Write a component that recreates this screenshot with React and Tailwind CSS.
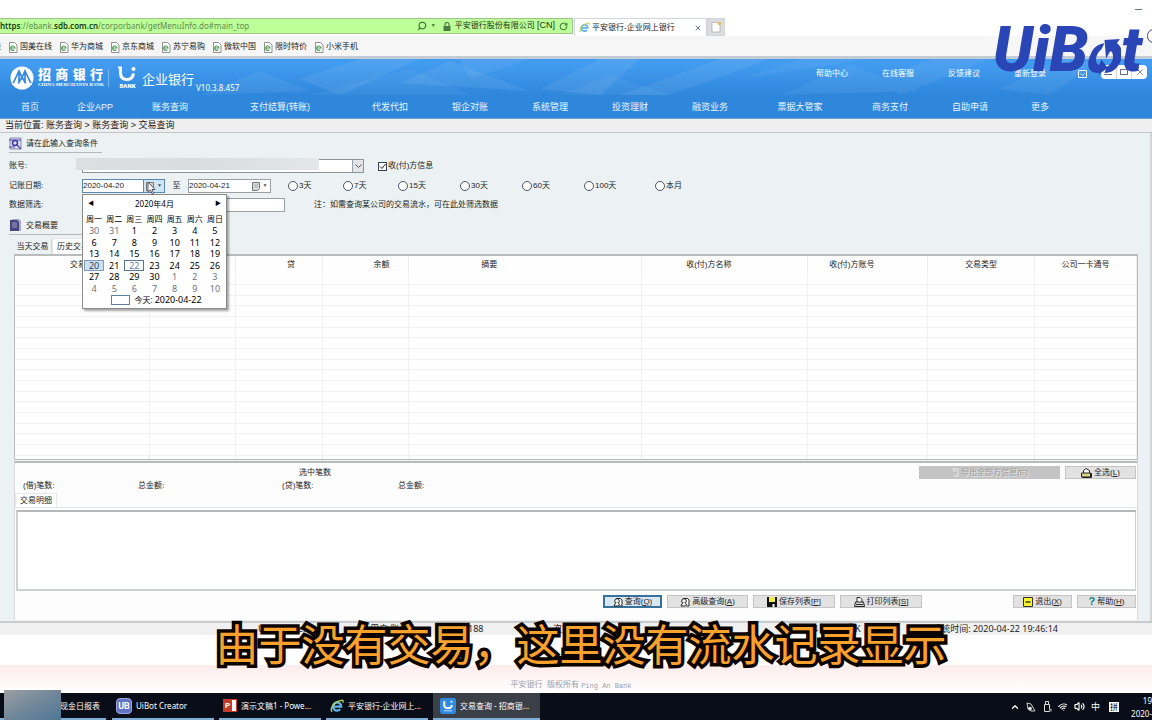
import { useState } from "react";
import { Search, RotateCw, X, ChevronUp, Wifi, Volume2 } from "lucide-react";

const bookmarks = ["国美在线", "华为商城", "京东商城", "苏宁易购", "微软中国", "限时特价", "小米手机"];

const menus = [
  { name: "首页", width: "w-[60px]" },
  { name: "企业APP", width: "w-[70px]" },
  { name: "账务查询", width: "w-20" },
  { name: "支付结算(转账)", width: "w-[140px]" },
  { name: "代发代扣", width: "w-20" },
  { name: "银企对账", width: "w-20" },
  { name: "系统管理", width: "w-20" },
  { name: "投资理财", width: "w-20" },
  { name: "融资业务", width: "w-20" },
  { name: "票据大管家", width: "w-[100px]" },
  { name: "商务支付", width: "w-20" },
  { name: "自助申请", width: "w-20" },
  { name: "更多", width: "w-[60px]" },
];

const ranges = [
  { name: "3天", width: "w-[55px]" },
  { name: "7天", width: "w-[55px]" },
  { name: "15天", width: "w-[62px]" },
  { name: "30天", width: "w-[62px]" },
  { name: "60天", width: "w-[62px]" },
  { name: "100天", width: "w-[71px]" },
  { name: "本月", width: "w-[40px]" },
];

const columns = [
  { name: "交易日", width: "w-[12%]", pad: "p-0" },
  { name: "借", width: "w-[7.7%]", pad: "p-0" },
  { name: "贷", width: "w-[7.7%]", pad: "py-0 pr-0 pl-6" },
  { name: "余额", width: "w-[7.7%]", pad: "py-0 pr-0 pl-8" },
  { name: "摘要", width: "w-[20.8%]", pad: "py-0 pl-0 pr-[72px]" },
  { name: "收(付)方名称", width: "w-[14.8%]", pad: "py-0 pl-0 pr-8" },
  { name: "收(付)方账号", width: "w-[10.7%]", pad: "py-0 pl-0 pr-8" },
  { name: "交易类型", width: "w-[9.5%]", pad: "p-0" },
  { name: "公司一卡通号", width: "w-[9.1%]", pad: "p-0" },
];

const weekDays = ["周一", "周二", "周三", "周四", "周五", "周六", "周日"];

// 2020-04: two days of march before, ten days of may after
const days = [
  ...[30, 31].map((d) => ({ d, out: true })),
  ...Array.from({ length: 30 }, (_, i) => ({ d: i + 1, out: false })),
  ...Array.from({ length: 10 }, (_, i) => ({ d: i + 1, out: true })),
];

function PageIcon() {
  return (
    <svg className="w-[10px] h-[11px] shrink-0" viewBox="0 0 10 11" fill="none">
      <path d="M1.500 .5h5l2.500 2.500v7.500h-7.500z" fill="#fff" stroke="#777" strokeWidth=".8" />
      <path d="M2.600 6h4.400a2.200 2.200 0 1 0-.6 1.700" stroke="#4c9a52" strokeWidth="1.100" />
    </svg>
  );
}

function IeIcon({ className }) {
  return (
    <svg className={className} viewBox="0 0 16 16" fill="none">
      <path d="M3.500 8.600h9.300a4.700 4.700 0 1 0-1.200 3.200" stroke="#5fb4e8" strokeWidth="2.600" />
      <path d="M2.500 14.500C-1 12 4 3.500 13 1.500c2-.3 2.500.8 1.500 2.800" stroke="#b9d65c" strokeWidth="1.500" />
    </svg>
  );
}

function BrowserBar() {
  return (
    <div>
      <div className="h-[18px] bg-white flex justify-end items-center pr-[10px]">
        <span className="w-[7px] h-px bg-gray-500" />
      </div>
      <div className="flex h-[18px] bg-white items-start">
        <div className="w-[573px] h-4 flex items-center bg-[#bdff98] border border-l-0 border-[#9fc68a] text-[#2f6b2c] text-[8px]">
          <span className="font-['Noto_Sans'] text-[#5f8d50] flex-1 leading-3 whitespace-nowrap">
            <b className="text-[#173d12] font-semibold">https</b>://ebank.
            <b className="text-[#173d12] font-semibold">sdb.com.cn</b>/corporbank/getMenuInfo.do#main_top
          </span>
          <Search className="w-[10px] h-[10px] -scale-x-100" strokeWidth={2.5} />
          <span className="text-[5px] ml-1 mr-[7px]">▼</span>
          <svg className="w-2 h-[9px] mr-1" viewBox="0 0 8 9">
            <path d="M2 4V2.500a2 2 0 0 1 4 0V4" fill="none" stroke="#4b7c42" strokeWidth="1.200" />
            <path d="M.5 4h7v5h-7z" fill="#4b7c42" />
          </svg>
          <span className="text-[#1c3319] whitespace-nowrap">平安银行股份有限公司 <span className="text-[9px]">[CN]</span></span>
          <RotateCw className="w-[9px] h-[9px] mx-1" strokeWidth={2.5} />
        </div>
        <div className="w-[133px] h-[18px] flex items-center bg-white border border-b-0 border-gray-300 px-1 text-[8px] ml-px">
          <IeIcon className="w-[11px] h-[11px] mr-[2px]" />
          <span className="flex-1 whitespace-nowrap">平安银行-企业网上银行</span>
          <X className="w-2 h-2 text-gray-500" strokeWidth={3} />
        </div>
        <button className="w-[18px] h-[18px] bg-[#dcdcdc] border border-gray-300 flex items-center justify-center" aria-label="新建选项卡">
          <svg className="w-[11px] h-3" viewBox="0 0 11 12">
            <path d="M1 1.500h5.500l2.500 2.500v7H1z" fill="#fff" stroke="#aaa" strokeWidth=".7" />
            <circle cx="8.500" cy="2.500" r="1.700" fill="#e8b768" />
          </svg>
        </button>
      </div>
      <div className="h-5 pt-[2px] bg-[#f7f6f6] flex items-center gap-[7px] text-[8px] overflow-hidden">
        <span className="w-px flex justify-end text-gray-600">线</span>
        {bookmarks.map((b) => (
          <a key={b} href="#" className="flex items-center gap-[2px] whitespace-nowrap">
            <PageIcon />
            {b}
          </a>
        ))}
      </div>
    </div>
  );
}

function BankHeader() {
  return (
    <header className="relative border-t-[3px] border-[#c3cbd4] bg-gradient-to-b from-[#419bef] from-10% to-[#2f87dc] to-60% text-white">
      <svg className="absolute inset-0 w-full h-9" viewBox="0 0 1152 36" preserveAspectRatio="none" fill="#fff">
        <path opacity=".07" d="M300 20L360 0h60l-80 36zM400 24L450 2l80 30zM540 30L600 0h40l-40 36zM620 36L720 0h50l-100 36z" />
        <path opacity=".06" d="M780 36L850 6l70 26zM880 20L930 0h60l-90 36zM200 36l60-24 50 20zM460 0h70l-60 20zM1000 30L1060 0h40l-50 36z" />
        <path opacity=".05" d="M310 36L410 10l60 26zM560 36l50-20 60 20zM740 20L800 0h70z" />
      </svg>
      <div className="relative flex items-center h-[37px] pl-[10px] pr-[5px]">
        <svg className="w-6 h-6 shrink-0" viewBox="0 0 24 24">
          <circle cx="12" cy="12" r="11.500" fill="#fff" />
          <path d="M3 17.500L9 5l3 6.500L15 5l6 12.500M8 18l4-7 4 7M9 6v12M15 6v12" fill="none" stroke="#3489de" strokeWidth="1.700" />
          <path d="M2 18.200h20" stroke="#fff" strokeWidth="1.600" />
        </svg>
        <div className="ml-1 w-[65px]">
          <div className="flex justify-between font-black text-[13px] leading-[15px]">
            <span>招</span><span>商</span><span>银</span><span>行</span>
          </div>
          <div className="font-['Liberation_Serif'] font-bold text-[5px] leading-[6px] whitespace-nowrap">CHINA MERCHANTS BANK</div>
        </div>
        <span className="w-px h-[18px] bg-[#79b8f3] ml-[5px] mr-[9px]" />
        <div className="w-[19px] flex flex-col items-center">
          <svg className="w-[19px] h-[17px]" viewBox="0 0 19 17" fill="none">
            <path d="M2.500 1v6c0 4.500 3 6.500 6.800 6.500 3 0 5.500-2 6.200-6" stroke="#fff" strokeWidth="3" />
            <path d="M0 1.500h4" stroke="#fff" strokeWidth="2" />
            <circle cx="15.500" cy="3" r="2" fill="#fff" />
          </svg>
          <span className="font-['Roboto'] font-black text-[6px] leading-[6px]">BANK</span>
        </div>
        <span className="text-[13px] leading-5 ml-[5px] mt-1 whitespace-nowrap">企业银行</span>
        <span className="font-['Noto_Sans'] text-[8px] leading-3 ml-[2px] self-end mb-[2px]">V10.3.8.457</span>
        <div className="ml-auto flex gap-[34px] text-[8px] mb-2 whitespace-nowrap">
          <a href="#">帮助中心</a>
          <a href="#">在线客服</a>
          <a href="#">反馈建议</a>
          <a href="#">重新登录</a>
        </div>
        <svg className="w-[9px] h-[9px] ml-8 mr-[14px] mb-2" viewBox="0 0 9 9" fill="none" stroke="#fff">
          <path d="M.5 1.500h8v7h-8zM2.500 4.500l2 2 2-2" />
        </svg>
        <div className="flex w-[46px] h-[14px] rounded-sm bg-white mb-3 text-gray-500">
          <button className="flex-1 flex items-end justify-center pb-1" aria-label="最小化"><span className="w-2 h-px bg-gray-500" /></button>
          <button className="flex-1 flex items-center justify-center border-x border-gray-300" aria-label="最大化"><span className="w-2 h-[6px] border border-gray-500" /></button>
          <button className="flex-1 flex items-center justify-center" aria-label="关闭"><X className="w-[10px] h-[10px]" /></button>
        </div>
      </div>
      <nav className="relative flex h-[22px] items-center pt-[2px] text-[9px]">
        {menus.map((m) => (
          <a key={m.name} href="#" className={`${m.width} text-center whitespace-nowrap text-[#e8f4ff]`}>{m.name}</a>
        ))}
      </nav>
    </header>
  );
}

function CalendarGlyph() {
  return (
    <span className="flex items-center gap-[3px]">
      <svg className="w-2 h-[9px]" viewBox="0 0 8 9">
        <path d="M.5.5h7v6l-2 2h-5z" fill="#d6dadd" stroke="#777" />
        <path d="M2 3h4M2 5h4" stroke="#999" strokeWidth=".6" />
      </svg>
      <span className="text-[5px] text-gray-600">▼</span>
    </span>
  );
}

function Calendar() {
  return (
    <div className="absolute -left-px top-[14px] z-10 w-[145px] h-[115px] bg-white border border-[#8b8b8b] shadow-[2px_2px_2px_rgba(0,0,0,0.35)] text-[9px] text-black font-['Noto_Sans','Noto_Sans_CJK_SC',sans-serif]">
      <div className="flex items-center justify-between h-[17px] px-[5px] text-[8px]">
        <button className="text-[6px]" aria-label="上个月">◀</button>
        <span>2020年4月</span>
        <button className="text-[6px]" aria-label="下个月">▶</button>
      </div>
      <div className="grid grid-cols-7 mx-px h-[13px] text-[8px] leading-[14px] text-center whitespace-nowrap">
        {weekDays.map((w) => <span key={w}>{w}</span>)}
      </div>
      <div className="grid grid-cols-7 grid-rows-6 mx-px h-[69px]">
        {days.map(({ d, out }, i) => {
          let style = out ? "text-gray-500" : "text-black";
          if (!out && d === 20) style = "bg-[#cfe0f0] border border-[#7d9cbc] text-[#27435f]";
          if (!out && d === 22) style = "border border-[#58748e] text-[#5d83a8]";
          return (
            <button key={i} className={`${style} flex items-center justify-center leading-none`}>{d}</button>
          );
        })}
      </div>
      <div className="flex items-center justify-center gap-1 h-3 pl-1 text-[8px]">
        <span className="w-[19px] h-[10px] border border-[#5f7f9f]" />
        <span>今天: <span className="text-[9px]">2020-04-22</span></span>
      </div>
      <svg className="absolute left-[64px] -top-[14px] w-[9px] h-[14px]" viewBox="0 0 9 14">
        <path d="M1 1v10l2.500-2 1.700 4 1.500-.7L5 8.500h3z" fill="#fff" stroke="#333" strokeWidth=".8" />
      </svg>
    </div>
  );
}

function QueryForm() {
  const [range, setRange] = useState("");
  const [payer, setPayer] = useState(true);

  return (
    <form className="text-[8px] pl-[9px]" onSubmit={(e) => e.preventDefault()}>
      <div className="w-[93px] h-5 pt-[2px] flex items-center gap-1 border-b border-[#b5b9ba] whitespace-nowrap">
        <svg className="w-[13px] h-[13px] shrink-0" viewBox="0 0 13 13" fill="none">
          <path d="M1 1h11v11H1z" fill="#dfe0f5" stroke="#8487b0" />
          <circle cx="6" cy="6" r="2.500" stroke="#3a37a0" strokeWidth="1.500" />
          <path d="M8 8l4 4M0 3h12M0 10h6" stroke="#4c48a8" strokeWidth="1.200" />
        </svg>
        请在此输入查询条件
      </div>

      <div className="flex items-center h-[14px] mt-[6px]">
        <label htmlFor="account" className="w-[73px]">账号:</label>
        <div className="relative w-[282px] h-[14px]">
          <select id="account" className="appearance-none w-full h-full bg-white border border-[#8e9499] block">
            <option></option>
          </select>
          <span className="absolute right-px top-px w-[11px] h-3 bg-[#e3e5e6] border-l border-gray-400 flex items-center justify-center pointer-events-none">
            <svg className="w-[7px] h-1" viewBox="0 0 7 4" fill="none" stroke="#555"><path d="M.5.5l3 3 3-3" /></svg>
          </span>
          {/* masked account number */}
          <span className="absolute -left-[6px] -top-px w-[243px] h-3 bg-gradient-to-r from-[#dcdfe1] via-[#d9dddf] to-[#e4e6e7]" />
        </div>
        <label className="flex items-center gap-px ml-[14px]">
          <input type="checkbox" checked={payer} onChange={() => setPayer(!payer)} className="peer appearance-none w-[9px] h-[9px] border border-gray-700 bg-white" />
          <svg className="w-[7px] h-[7px] -ml-[9px] mr-px invisible peer-checked:visible" viewBox="0 0 7 7" fill="none" stroke="#222"><path d="M1 3.500l2 2L6.500 1" /></svg>
          收(付)方信息
        </label>
      </div>

      <div className="flex items-center h-[14px] mt-[6px]">
        <label htmlFor="from" className="w-[73px]">记账日期:</label>
        <div className="relative flex w-[83px] h-[14px] bg-white border border-[#5889b0]">
          <input id="from" defaultValue="2020-04-20" className="w-[60px] outline-none" />
          <button className="w-[22px] flex items-center justify-center bg-[#cfe4f5] border-l border-[#5889b0]" aria-label="选择日期"><CalendarGlyph /></button>
          <Calendar />
        </div>
        <label htmlFor="to" className="w-[23px] text-center">至</label>
        <div className="flex w-[83px] h-[14px] bg-white border border-[#9a9fa3]">
          <input id="to" defaultValue="2020-04-21" className="w-[60px] outline-none" />
          <button className="w-[22px] flex items-center justify-center" aria-label="选择日期"><CalendarGlyph /></button>
        </div>
        <div className="flex ml-[17px]">
          {ranges.map((r) => (
            <label key={r.name} className={`${r.width} flex items-center gap-px whitespace-nowrap`}>
              <input type="radio" name="range" checked={range === r.name} onChange={() => setRange(r.name)} className="appearance-none w-[10px] h-[10px] rounded-full border border-gray-600 bg-white checked:bg-gray-500" />
              {r.name}
            </label>
          ))}
        </div>
      </div>

      <div className="flex items-center h-[14px] mt-[5px]">
        <label htmlFor="filter" className="w-[73px]">数据筛选:</label>
        <input id="filter" className="w-[203px] h-[14px] bg-white border border-[#9a9fa3]" />
        <span className="ml-[29px]">注：如需查询某公司的交易流水，可在此处筛选数据</span>
      </div>

      <div className="w-[93px] h-[18px] mt-[5px] flex items-center gap-1 border-b border-[#b5b9ba] whitespace-nowrap">
        <svg className="w-[13px] h-[13px] shrink-0" viewBox="0 0 13 13">
          <path d="M3 0h7l2 2v10H5z" fill="#a8a8c8" />
          <path d="M1 1h7l2 2v9H1z" fill="#47467e" />
          <path d="M3 4h5M3 6h5M3 8h5" stroke="#b9b9dc" strokeWidth=".8" />
        </svg>
        交易概要
      </div>
    </form>
  );
}

function ResultTable() {
  return (
    <div className="ml-[14px] mr-3 mt-[3px]">
      <div className="flex items-end h-4 text-[8px]">
        <button className="h-[15px] w-[38px] border-r border-gray-300">当天交易</button>
        <button className="h-4 w-[42px] bg-white border border-b-0 border-gray-200">历史交易</button>
      </div>
      <div className="h-[206px] bg-[#fefefe] border border-t-2 border-[#b9bbbd] overflow-hidden">
        <table className="w-full table-fixed border-collapse text-[8px]">
          <thead>
            <tr className="h-[17px]">
              {columns.map((c) => (
                <th key={c.name} className={`${c.width} ${c.pad} font-normal border-r border-[#eeeeee] leading-3`}>{c.name}</th>
              ))}
            </tr>
          </thead>
          <tbody>
            {Array.from({ length: 18 }, (_, i) => (
              <tr key={i} className={i % 3 === 2 ? "h-[10px]" : "h-[11px]"}>
                {columns.map((c) => <td key={c.name} className="border-r border-b border-[#f1f1f1] p-0" />)}
              </tr>
            ))}
          </tbody>
        </table>
      </div>
    </div>
  );
}

function ToolButton({ icon, text, hotkey, square, width, active }) {
  const color = active ? "bg-[#d9e7f1] border-[#38719a] border-2" : "bg-[#e2e2e2] border-[#c4c4c4] border";
  return (
    <button className={`${width} ${color} h-[13px] flex items-center justify-center gap-[2px] whitespace-nowrap text-[8px] leading-none`}>
      {icon}
      <span>{text}{square ? "[" : "("}<u>{hotkey}</u>{square ? "]" : ")"}</span>
    </button>
  );
}

const searchIcon = (
  <svg className="w-[10px] h-[10px]" viewBox="0 0 10 10" fill="none" stroke="#222">
    <path d="M3 1.500h4.500l1.500 1.500v6H6.500" fill="#fff" />
    <circle cx="4" cy="4" r="2.300" fill="#fff" />
    <path d="M2.500 6L1 9h4l1.500-1L5.500 6" fill="#fff" />
  </svg>
);

const saveIcon = (
  <svg className="w-[10px] h-[10px]" viewBox="0 0 10 10">
    <path d="M0 0h10v10H0z" fill="#111" />
    <path d="M2 0h6v5H2z" fill="#f3ea4c" />
    <path d="M5.500 7h2v3h-2z" fill="#fff" />
  </svg>
);

const printIcon = (
  <svg className="w-[11px] h-[10px]" viewBox="0 0 11 10" fill="#fff" stroke="#222">
    <path d="M3 5V.5h3L8 2.500V5" />
    <path d="M1.500 5h8l1 4.500h-10z" fill="#ddd" />
    <path d="M2 7.500h7" />
  </svg>
);

const exitIcon = (
  <svg className="w-[10px] h-[10px]" viewBox="0 0 10 10">
    <path d="M.5.5h9v9h-9z" fill="#f7f32d" stroke="#333" />
    <path d="M2.500 5h5" stroke="#222" strokeWidth="1.300" />
  </svg>
);

const selectIcon = (
  <svg className="w-[11px] h-[10px]" viewBox="0 0 11 10" stroke="#222">
    <path d="M2.500 5V2.500L5 .5 8.500 2.500v3" fill="#fff" />
    <path d="M.5 5h9v4h-9z" fill="#d6d683" />
    <path d="M1 9.500h9.500V5" fill="none" />
  </svg>
);

function Details() {
  return (
    <section className="ml-[14px] mr-3 mt-px bg-[#fdfdfd] border-t-2 border-x border-[#b9bbbd] border-x-[#d8dadb] text-[8px]">
      <div className="flex justify-between h-[30px] pt-[3px] pr-px">
        <div>
          <div className="h-[13px] leading-[13px] pl-[284px]">选中笔数</div>
          <div className="flex h-[13px] leading-[13px] pl-2">
            <span className="w-[115px]">(借)笔数:</span>
            <span className="w-36">总金额:</span>
            <span className="w-[116px]">(贷)笔数:</span>
            <span>总金额:</span>
          </div>
        </div>
        <div className="flex gap-[5px]">
          <button disabled className="w-[141px] h-[13px] bg-[#c4c4c4] text-[#9b9b9b] flex items-center justify-center gap-[2px] [text-shadow:1px_1px_0_#eee]">
            <svg className="w-2 h-[9px]" viewBox="0 0 8 9" fill="none" stroke="#e8e8e8"><path d="M1 1h6v7H3M2 3h3" /></svg>
            导出全部方信息(E)
          </button>
          <ToolButton icon={selectIcon} text="全选" hotkey="L" width="w-[71px]" />
        </div>
      </div>
      <button className="block h-[14px] w-[42px] border border-b-0 border-gray-200 bg-white">交易明细</button>
      <div className="border-t border-[#e4e4e4] pt-[2px] px-px">
        <div className="h-[81px] border-2 border-[#cfd0d1] border-t-[#b5b7b9] border-r bg-white" />
      </div>
      <div className="flex items-start h-[29px] pt-1 pr-px gap-[5px]">
        <div className="flex gap-[5px] ml-[588px]">
          <ToolButton icon={searchIcon} text="查询" hotkey="Q" width="w-[59px]" active />
          <ToolButton icon={searchIcon} text="高级查询" hotkey="A" width="w-[81px]" />
          <ToolButton icon={saveIcon} text="保存列表" hotkey="P" square width="w-[82px]" />
          <ToolButton icon={printIcon} text="打印列表" hotkey="S" square width="w-[82px]" />
        </div>
        <div className="flex gap-[5px] ml-auto">
          <ToolButton icon={exitIcon} text="退出" hotkey="X" width="w-[59px]" />
          <ToolButton icon={<b className="text-[11px] text-[#0b8282]">?</b>} text="帮助" hotkey="H" width="w-[59px]" />
        </div>
      </div>
    </section>
  );
}

function StatusBar() {
  return (
    <div className="h-[14px] flex items-center bg-[#f0f0f0] border-t-2 border-[#c9cbcc] text-[9px] leading-3 whitespace-nowrap pl-[258px] pr-[94px] font-['Noto_Sans','Noto_Sans_CJK_SC',sans-serif]">
      <span className="w-[112px]">UserName: Na</span>
      <span className="w-[98px]">用户 账号:</span>
      <span className="w-[85px]">188</span>
      <span className="w-[260px]">次数: 188</span>
      <span className="w-[35px]">4</span>
      <span className="flex-1">OK</span>
      <span>系统时间: 2020-04-22 19:46:14</span>
    </div>
  );
}

function TaskItem({ icon, text, active }) {
  return (
    <button className={`${active ? "w-[107px] bg-[#3b3f48] pl-[7px]" : "w-[102px] pl-1"} h-full flex items-center gap-1 border-b-2 border-[#7faed6] text-white text-[8px] whitespace-nowrap`}>
      {icon}
      {text}
    </button>
  );
}

function Taskbar() {
  return (
    <div className="relative h-[27px] bg-[#080d17] flex items-center gap-[6px] text-white text-[8px] font-['Noto_Sans','Noto_Sans_CJK_SC',sans-serif]">
      <button className="w-[106px] h-full text-left pl-[60px] border-b-2 border-[#7faed6] whitespace-nowrap">现金日报表</button>
      {/* blurred start area */}
      <span className="absolute left-1 bottom-0 w-[57px] h-[30px] bg-gradient-to-br from-[#9b9fa3] via-[#71879a] to-[#4f7796]" />
      <div className="flex h-full gap-[5px]">
        <TaskItem
          text="UiBot Creator"
          icon={<span className="w-4 h-4 rounded bg-[#6272c4] border border-[#9aa5e0] font-bold text-[9px] leading-[14px] text-center font-['Roboto']">UB</span>}
        />
        <TaskItem
          text="演示文稿1 - Powe..."
          icon={
            <span className="flex w-[14px] h-[13px] bg-white">
              <span className="w-[9px] bg-[#c43a2c] font-bold text-[8px] leading-[13px] text-center font-['Roboto']">P</span>
              <span className="flex-1 border border-[#c43a2c] border-l-0" />
            </span>
          }
        />
        <TaskItem text="平安银行-企业网上..." icon={<IeIcon className="w-[14px] h-[14px] shrink-0" />} />
        <TaskItem
          active
          text="交易查询 - 招商银..."
          icon={
            <svg className="w-4 h-4 shrink-0" viewBox="0 0 15 15" fill="none" stroke="#fff">
              <rect width="15" height="15" rx="2" fill="#2f8ae0" stroke="none" />
              <path d="M4 3v3.500c0 4 7 4 7 0" strokeWidth="1.800" />
              <circle cx="10.800" cy="3.500" r=".5" />
              <path d="M4 12h7" strokeDasharray="1.300 .6" />
            </svg>
          }
        />
      </div>
      <div className="ml-auto flex items-center gap-[6px]">
        <ChevronUp className="w-[10px] h-[10px]" strokeWidth={3} />
        <svg className="w-[10px] h-[10px]" viewBox="0 0 10 10" fill="none" stroke="#ccc">
          <path d="M1 1l4 1 4 7H5L2 7z" />
          <circle cx="4" cy="6.500" r="1.500" fill="#fff" />
        </svg>
        <svg className="w-[10px] h-[11px]" viewBox="0 0 10 11" fill="none" stroke="#ddd">
          <path d="M3.500 3.500v-3h3v3M2.500 3.500h5v7h-5z" />
          <circle cx="8.500" cy="9" r="1.500" fill="#888" stroke="none" />
        </svg>
        <Wifi className="w-[10px] h-[10px] -rotate-12" strokeWidth={2.5} />
        <Volume2 className="w-[11px] h-[11px]" strokeWidth={2.5} />
        <span className="text-[9px]">中</span>
        <span className="w-[10px] h-[10px] bg-white text-black text-[8px] leading-[10px] text-center ml-[3px]">拼</span>
        <div className="ml-[6px] text-right text-[8px] leading-[13px]">
          <div>19</div>
          <div>2020-</div>
        </div>
      </div>
    </div>
  );
}

function UiBotMark() {
  return (
    <div className="absolute right-[10px] top-[15px] flex items-center text-[#2a45b5] font-['Roboto'] font-black italic text-[62px] leading-[70px]">
      <span>UiB</span>
      <svg className="w-[34px] h-[37px] mt-3 -ml-px" viewBox="0 0 33 36">
        <path d="M12 34C1 35-1 26 3 17 6 9 10 6 17 5l-3 6c-4 3-6 8-5 12 .5 2 1.500 3 3 3l2-5 6 8-9 7z" fill="#2a45b5" />
        <path d="M17 2l15-1-3 4c6 4 6 12 3 19-3 6-8 10-15 10l2-6c5-2 7-8 6-12-.3-2-1-3-2.500-3l-4 7z" fill="#2a45b5" />
      </svg>
      <span>t</span>
    </div>
  );
}

export default function App() {
  return (
    <div className="relative min-h-screen flex flex-col overflow-hidden bg-white text-[#222] font-['Liberation_Sans','Noto_Sans_CJK_SC',sans-serif]">
      <BrowserBar />
      <BankHeader />
      <div className="h-[15px] flex items-center pl-[5px] text-[9px] bg-[#efefef] border-t border-[#6f9fd0] border-b border-b-[#c4c6c8]">
        当前位置: 账务查询 &gt; 账务查询 &gt; 交易查询
      </div>
      <main className="bg-[#ecf2f3] border-r-2 border-[#d2d4d6] pb-px">
        <QueryForm />
        <ResultTable />
        <Details />
      </main>
      <StatusBar />
      <footer className="flex-1 flex flex-col justify-end pt-[30px]">
        <div className="h-7 bg-gradient-to-b from-[#fdeceb] to-white flex items-end justify-center text-[8px] text-gray-400 pb-[2px] pr-[10px] whitespace-pre">
          平安银行  版权所有 <span className="font-['Liberation_Mono'] text-[7px]">Ping An Bank</span>
        </div>
      </footer>
      <Taskbar />

      <UiBotMark />
      <span className="absolute -right-2 top-[29px] w-[13px] h-[14px] rounded-full border border-[#3f4a86]" />
      <p className="absolute inset-x-0 top-[610px] pl-[10px] text-center whitespace-nowrap font-['Noto_Sans_CJK_SC'] font-normal text-[43px] leading-[64px] text-[#f8a12c] [-webkit-text-stroke:7px_#0b0300] [paint-order:stroke_fill] [stroke-linejoin:round]">
        由于没有交易，这里没有流水记录显示
      </p>
    </div>
  );
}
